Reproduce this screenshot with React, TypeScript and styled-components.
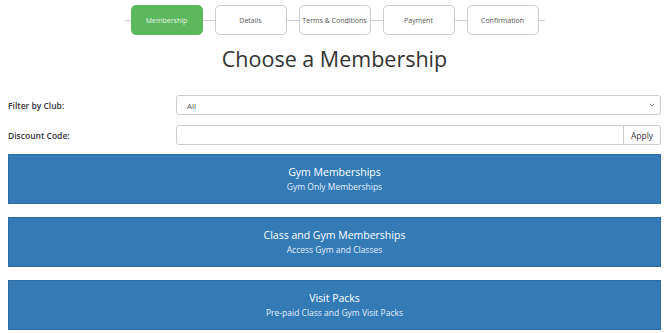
import React from "react";
import styled, { createGlobalStyle } from "styled-components";

const GlobalStyle = createGlobalStyle`
  body {
    margin: 0;
    background: #fff;
    font-family: "Open Sans", "Liberation Sans", sans-serif;
    color: #333;
  }
`;

const Page = styled.div`
  padding: 5px 8px 0;
`;

const Stepper = styled.div`
  display: flex;
  align-items: center;
  justify-content: center;
`;

const Connector = styled.div<{ $w: number }>`
  width: ${(p) => p.$w}px;
  height: 1px;
  background: #ccc;
`;

const Step = styled.div<{ $active?: boolean }>`
  width: 72px;
  height: 30px;
  box-sizing: border-box;
  display: flex;
  align-items: center;
  justify-content: center;
  font-size: 7px;
  border-radius: 5px;
  border: 1px solid ${(p) => (p.$active ? "#5cb85c" : "#ccc")};
  background: ${(p) => (p.$active ? "#5cb85c" : "#fff")};
  color: ${(p) => (p.$active ? "#e8f5e8" : "#555")};
`;

const Title = styled.h1`
  margin: 9px 0 0;
  font-size: 21.5px;
  font-weight: 400;
  text-align: center;
  line-height: 30px;
  color: #333;
`;

const Form = styled.div`
  margin-top: 21px;
  display: grid;
  grid-template-columns: 168px 1fr;
  row-gap: 10px;
  align-items: center;
`;

const Label = styled.label`
  font-size: 8.5px;
  font-weight: 600;
  color: #333;
`;

const Select = styled.div`
  height: 20px;
  box-sizing: border-box;
  border: 1px solid #ccc;
  border-radius: 3px;
  display: flex;
  align-items: center;
  justify-content: space-between;
  padding: 0 5px 0 10px;
  font-size: 8px;
  color: #555;
`;

const InputGroup = styled.div`
  display: flex;
  height: 20px;
`;

const Input = styled.div`
  flex: 1;
  box-sizing: border-box;
  border: 1px solid #ccc;
  border-radius: 3px 0 0 3px;
`;

const ApplyButton = styled.div`
  width: 37px;
  box-sizing: border-box;
  border: 1px solid #ccc;
  border-left: none;
  border-radius: 0 3px 3px 0;
  background: #fff;
  display: flex;
  align-items: center;
  justify-content: center;
  font-size: 8.5px;
  color: #333;
`;

const Cards = styled.div`
  margin-top: 9px;
  display: flex;
  flex-direction: column;
  gap: 13px;
`;

const Card = styled.div`
  height: 50px;
  box-sizing: border-box;
  background: #337ab7;
  border: 1px solid #2e6da4;
  display: flex;
  flex-direction: column;
  align-items: center;
  justify-content: center;
  color: #fff;
`;

const CardTitle = styled.div`
  font-size: 10.5px;
  line-height: 15px;
`;

const CardSub = styled.div`
  font-size: 8.5px;
  line-height: 12px;
  margin-top: 1px;
  color: #e8eef6;
`;

const steps = ["Membership", "Details", "Terms & Conditions", "Payment", "Confirmation"];

const cards = [
  { title: "Gym Memberships", sub: "Gym Only Memberships" },
  { title: "Class and Gym Memberships", sub: "Access Gym and Classes" },
  { title: "Visit Packs", sub: "Pre-paid Class and Gym Visit Packs" },
];

const Chevron = () => (
  <svg width="6" height="4" viewBox="0 0 6 4">
    <path d="M0.8 0.8l2.2 2.2L5.2 0.8" stroke="#777" strokeWidth="0.8" fill="none" />
  </svg>
);

export default function App() {
  return (
    <Page>
      <GlobalStyle />
      <Stepper>
        <Connector $w={6} />
        {steps.map((s, i) => (
          <React.Fragment key={s}>
            <Step $active={i === 0}>{s}</Step>
            <Connector $w={i === steps.length - 1 ? 6 : 12} />
          </React.Fragment>
        ))}
      </Stepper>
      <Title>Choose a Membership</Title>
      <Form>
        <Label>Filter by Club:</Label>
        <Select>
          <span>All</span>
          <Chevron />
        </Select>
        <Label>Discount Code:</Label>
        <InputGroup>
          <Input />
          <ApplyButton>Apply</ApplyButton>
        </InputGroup>
      </Form>
      <Cards>
        {cards.map((c) => (
          <Card key={c.title}>
            <CardTitle>{c.title}</CardTitle>
            <CardSub>{c.sub}</CardSub>
          </Card>
        ))}
      </Cards>
    </Page>
  );
}
